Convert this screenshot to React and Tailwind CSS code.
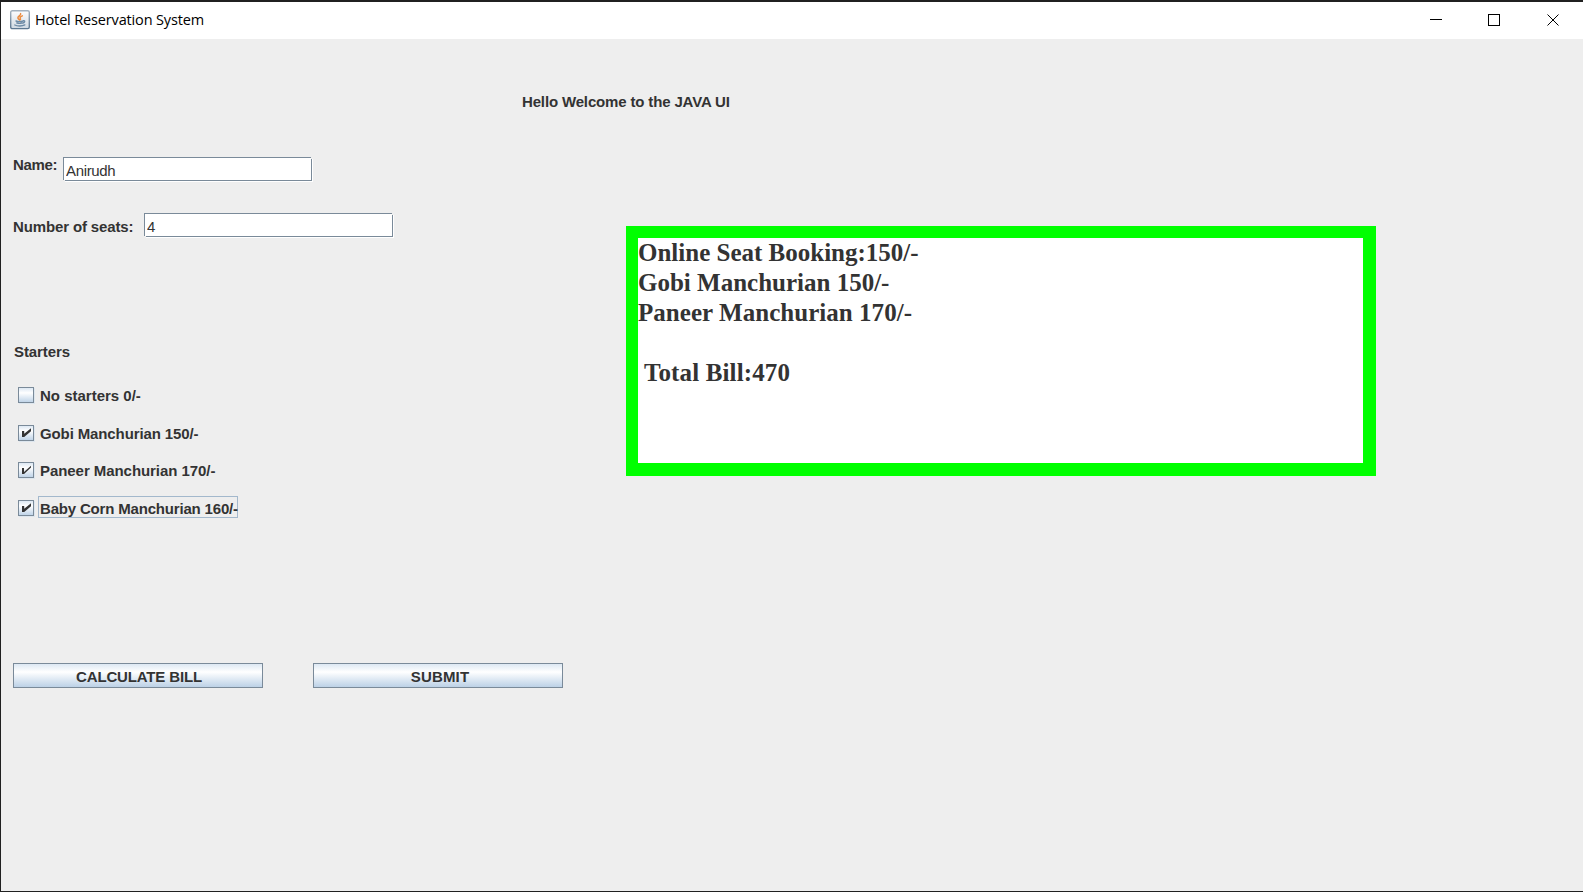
const label = "block whitespace-pre text-[15px] leading-5 font-bold text-[#333333]";

function JavaIcon() {
  return (
    <svg width="20" height="20" viewBox="0 0 20 20" fill="none" className="mb-px">
      <defs>
        <linearGradient id="tile" x1="0" y1="0" x2="0" y2="1">
          <stop offset="0" stopColor="#fdfdfd" />
          <stop offset="1" stopColor="#cfd9e2" />
        </linearGradient>
        <linearGradient id="edge" x1="0" y1="0" x2="0" y2="1">
          <stop offset="0" stopColor="#a3b1be" />
          <stop offset="1" stopColor="#5d7891" />
        </linearGradient>
      </defs>
      <rect x="0.7" y="0.7" width="18.6" height="17.900" rx="1.6" fill="url(#tile)" stroke="url(#edge)" strokeWidth="1.4" />
      <path d="M10.600 3.600c.8 1.900-2.900 2.500-2.700 4.300.1.9.9 1.300 1.600 2M12.300 5.900c-1.800.8-2.600 1.300-2 2.400.4.600.4 1-.3 1.600" stroke="#ec8a3c" strokeWidth="1.500" strokeLinecap="round" />
      <path d="M6 11c1.800.7 5 .7 7 0M6.700 12.900c1.600.6 3.800.6 5.400 0M13.300 10.700c2-.2 1.700 1.800-.4 2.300M4.800 15c2.500 1.300 7.500 1.300 10-.1" stroke="#6c8aa5" strokeWidth="1.400" strokeLinecap="round" />
    </svg>
  );
}

function TitleBar() {
  return (
    <header className="flex h-[37px] items-center bg-white pl-[9px]">
      <JavaIcon />
      <h1 className="mb-px ml-[5px] flex-1 whitespace-pre font-['Open_Sans',sans-serif] text-[14.5px] leading-5 tracking-[-0.150px] text-black">Hotel Reservation System</h1>
      <svg width="135" height="13" viewBox="0 0 135 13" className="mr-[19px]" fill="none" stroke="#000" shapeRendering="crispEdges">
        <path d="M1 5.500h12" />
        <rect x="59.500" y="0.500" width="11" height="11" />
        <path d="M118.500 0.500l11 11M129.500 0.500l-11 11" shapeRendering="auto" />
      </svg>
    </header>
  );
}

function Field({ value }) {
  return (
    <div className="relative h-[25px] w-[250px] border-r border-b border-white">
      <input
        readOnly
        value={value}
        className="block h-[24px] w-[249px] border border-[#7a8a99] bg-white pt-[3px] pl-[2px] text-[15px] leading-5 tracking-[-0.350px] text-[#333333] outline-none"
      />
      <span className="absolute top-0 right-0 h-[2px] w-px bg-[#eeeeee]" />
      <span className="absolute bottom-0 left-0 h-px w-[2px] bg-[#eeeeee]" />
      <span className="absolute -bottom-px left-0 h-px w-[2px] bg-[#eeeeee]" />
      <span className="absolute top-0 -right-px h-[2px] w-px bg-[#eeeeee]" />
    </div>
  );
}

function CheckMark({ thin }) {
  return (
    <svg width="14" height="14" viewBox="0 0 14 14" fill="#333333">
      <path d={thin ? "M3 5h2v4l7-6.200v1.600L5 11H3z" : "M3 5h2.200v2.800L12 2.300v3L5.200 11H3z"} />
    </svg>
  );
}

function Option({ text, checked, thin, focused, className }) {
  return (
    <div className={"flex h-[22px] items-center " + className}>
      <span className="h-4 w-4 border border-[#7a8a99] bg-linear-to-b from-[#dde8f3] via-white via-35% to-[#c0d4e8] shadow-[1px_1px_0_#dde6ee]">
        {checked && <CheckMark thin={thin} />}
      </span>
      <span className={"mb-[2px] ml-1 h-[22px] border pt-[2px] pl-px " + (focused ? "w-[200px] border-[#a3b8cc]" : "border-transparent")}>
        <span className={label}>{text}</span>
      </span>
    </div>
  );
}

function Button({ text, className }) {
  return (
    <button className={"h-[25px] w-[250px] border border-[#7a8a99] bg-linear-to-b from-[#dde8f3] via-white via-35% to-[#bcd1e6] pt-[3px] " + className}>
      <span className={label}>{text}</span>
    </button>
  );
}

export default function App() {
  return (
    <div className="flex h-[892px] w-[1583px] flex-col overflow-hidden border-t-2 border-b border-l border-[#202020] bg-[#eeeeee] font-['Liberation_Sans',Arial,sans-serif]">
      <TitleBar />
      <div className="pt-[53px] pl-[521px]">
        <span className={label + " tracking-[-0.150px]"}>Hello Welcome to the JAVA UI</span>
      </div>
      <main className="flex">
        <section className="w-[625px] pl-3">
          <div className="mt-[43px] flex items-start gap-[6px]">
            <span className={label + " w-[44px] tracking-[-0.350px]"}>Name:</span>
            <div className="mt-[2px]"><Field value="Anirudh" /></div>
          </div>
          <div className="mt-[31px] flex items-start">
            <span className={label + " mt-1 w-[131px] tracking-[-0.130px]"}>Number of seats:</span>
            <Field value="4" />
          </div>
          <div className="mt-[104px] pl-px">
            <span className={label + " tracking-[-0.100px]"}>Starters</span>
          </div>
          <div className="mt-[22px] flex flex-col pl-[5px]">
            <Option text="No starters 0/-" className="" />
            <Option text="Gobi Manchurian 150/-" checked className="mt-4 tracking-[-0.120px]" />
            <Option text="Paneer Manchurian 170/-" checked thin className="mt-[15px] tracking-[-0.060px]" />
            <Option text="Baby Corn Manchurian 160/-" checked focused className="mt-4 tracking-[-0.180px]" />
          </div>
          <div className="mt-[144px] flex gap-[50px]">
            <Button text="CALCULATE BILL" className="pl-[2px] tracking-[-0.150px]" />
            <Button text="SUBMIT" className="pl-[4px] tracking-[0.150px]" />
          </div>
        </section>
        <section className="mt-[114px] h-[250px] w-[750px] border-t-[12px] border-r-[13px] border-b-[13px] border-l-[12px] border-[#00ff00] bg-white">
          <pre className="font-['Liberation_Serif','Times_New_Roman',serif] text-[25px] leading-[30px] font-bold text-[#333333]">
            {"Online Seat Booking:150/-\nGobi Manchurian 150/-\n"}
            <span className="tracking-[0.040px]">{"Paneer Manchurian 170/-\n\n"}</span>
            <span className="tracking-[0.140px]"> Total Bill:470</span>
          </pre>
        </section>
      </main>
    </div>
  );
}
